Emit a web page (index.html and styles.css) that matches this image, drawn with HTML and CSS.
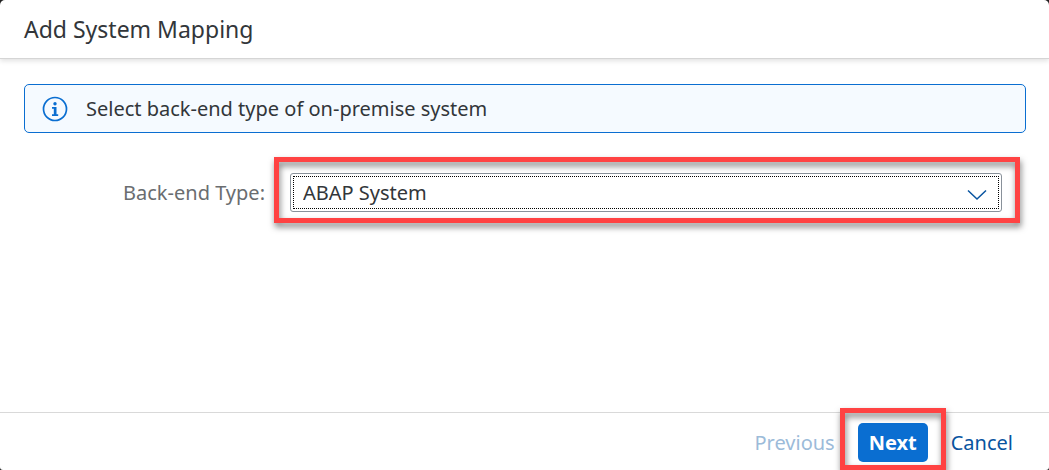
FILE: index.html
```html
<!DOCTYPE html>
<html lang="en">
<head>
  <meta charset="utf-8">
  <meta name="viewport" content="width=device-width, initial-scale=1">
  <title>Add System Mapping</title>
  <link rel="stylesheet" href="styles.css">
</head>
<body>
  <form class="dialog" role="dialog" aria-labelledby="dialog-title">
    <header class="dialog-header">
      <h1 class="dialog-title" id="dialog-title">Add System Mapping</h1>
    </header>
    <main class="dialog-body">
      <div class="message">
        <svg class="message-icon" viewBox="0 0 26 26" aria-hidden="true">
          <circle cx="13" cy="13" r="11.5" fill="none" stroke="currentColor" stroke-width="1.7"/>
          <circle cx="13" cy="7.7" r="1.7" fill="currentColor"/>
          <path d="M10 11h4.5v7.2h1.7v1.7H10v-1.7h1.8v-5.5H10z" fill="currentColor"/>
        </svg>
        <p class="message-text">Select back-end type of on-premise system</p>
      </div>
      <div class="field">
        <label class="field-label" for="backend-type">Back-end Type:</label>
        <div class="select-box highlight highlight-field">
          <select class="select" id="backend-type">
            <option>ABAP System</option>
          </select>
          <svg class="select-arrow" viewBox="0 0 20 12" aria-hidden="true">
            <path d="M1 1.5l9 8.5 9-8.5" fill="none" stroke="currentColor" stroke-width="1.5"/>
          </svg>
        </div>
      </div>
    </main>
    <footer class="dialog-footer">
      <button class="button button-quiet" type="button" disabled>Previous</button>
      <div class="highlight highlight-button">
        <button class="button button-primary" type="button">Next</button>
      </div>
      <button class="button button-quiet" type="button">Cancel</button>
    </footer>
  </form>
</body>
</html>
```
FILE: styles.css
```css
* {
  box-sizing: border-box;
}

body {
  margin: 0;
  background: #222;
  color: #32363a;
  font-family: "Noto Sans", "Open Sans", sans-serif;
  font-size: 20px;
  line-height: 27px;
  overflow: hidden;
}

.dialog {
  display: flex;
  flex-direction: column;
  min-height: 100vh;
  background: #fff;
  border-radius: 5px 5px 3px 3px;
}

.dialog-header {
  padding: 14px 24px;
  border-bottom: 1px solid #d5d5d5;
  border-radius: 5px 5px 0 0;
  box-shadow: 0 2px 5px rgba(0, 0, 0, 0.12);
}

.dialog-title {
  margin: 0;
  font-size: 23px;
  font-weight: 400;
  line-height: 30px;
}

.dialog-body {
  flex: 1;
  padding: 25px 23px 24px 24px;
}

.message {
  display: flex;
  align-items: center;
  gap: 18px;
  padding: 10px 17px;
  border: 1px solid #0a6ed1;
  border-radius: 5px;
  background: #f5faff;
}

.message-icon {
  width: 26px;
  height: 26px;
  color: #0a6ed1;
}

.message-text {
  margin: 0;
}

.field {
  display: flex;
  align-items: center;
  margin: 40px 24px 0 0;
}

.field-label {
  width: 241px;
  margin-right: 25px;
  color: #6a6d70;
  text-align: right;
}

.select-box {
  display: grid;
  flex: 1;
  align-items: center;
}

.select {
  grid-area: 1 / 1;
  width: 100%;
  height: 39px;
  padding: 0 48px 0 12px;
  border: 1px solid #89919a;
  border-radius: 3px;
  outline: 1px dotted #000;
  outline-offset: -4px;
  background: #fff;
  color: inherit;
  font: inherit;
  appearance: none;
}

.select-arrow {
  grid-area: 1 / 1;
  justify-self: end;
  width: 20px;
  height: 12px;
  margin: 4px 15px 0 0;
  color: #0854a0;
  pointer-events: none;
}

.dialog-footer {
  display: flex;
  align-items: center;
  justify-content: flex-end;
  gap: 12px;
  padding: 10px 25px 8px;
  border-top: 1px solid #d9d9d9;
}

.button {
  height: 39px;
  padding: 0 11px;
  border: 0;
  border-radius: 5px;
  background: transparent;
  font: inherit;
}

.button-quiet {
  color: #0854a0;
}

.button-quiet:disabled {
  color: #9cbbd9;
}

.button-primary {
  display: block;
  background: #0a6ed1;
  color: #fff;
  font-weight: 700;
}

/* Red call-out frame laid over a control and its surroundings */
.highlight {
  position: relative;
}

.highlight::after {
  content: "";
  position: absolute;
  border: 5px solid #ff4343;
  filter: drop-shadow(1px 4px 3px rgba(0, 0, 0, 0.5));
  pointer-events: none;
}

.highlight-field::after {
  inset: -16px -18px -11px -16px;
}

.highlight-button::after {
  inset: -15px -18px -8px -18px;
}
```
